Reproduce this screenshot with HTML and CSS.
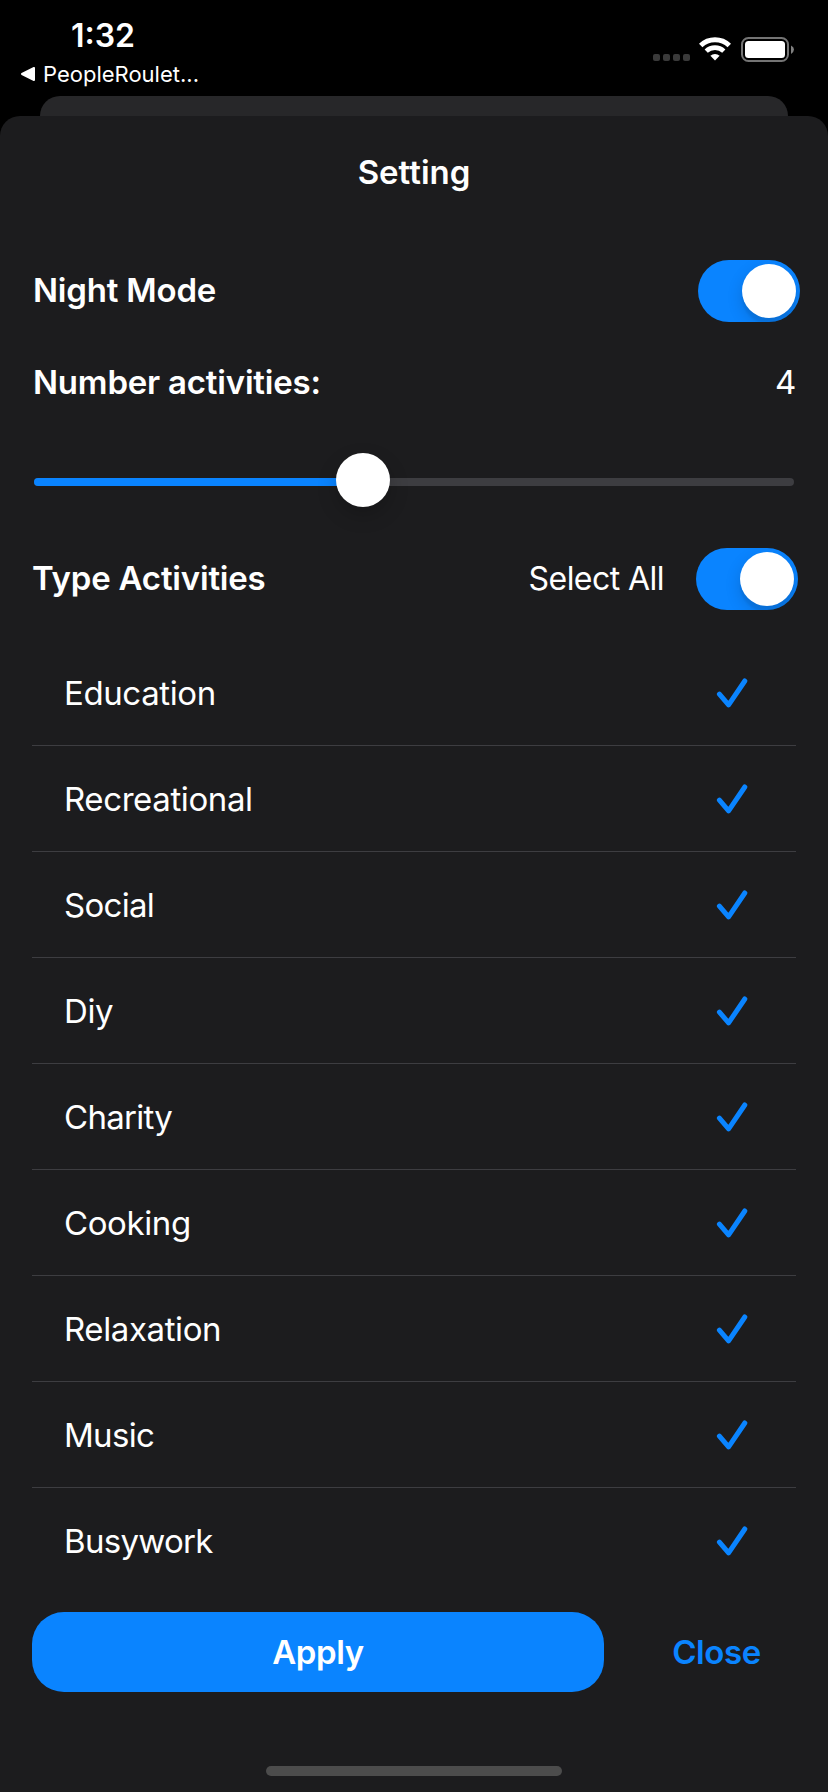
FILE: index.html
```html
<!DOCTYPE html>
<html lang="en">
<head>
<meta charset="utf-8">
<title>Setting</title>
<link rel="stylesheet" href="styles.css">
</head>
<body>
<svg class="defs" aria-hidden="true">
  <symbol id="check" viewBox="0 0 32 32"><path d="M3.4 17.1 12.6 27.9 28.8 4" fill="none" stroke="currentColor" stroke-width="5" stroke-linecap="round" stroke-linejoin="round"/></symbol>
</svg>
<header class="status">
  <div class="status-left">
    <div class="time">1:32</div>
    <div class="back">
      <svg class="back-arrow" width="15" height="14" viewBox="0 0 15 14"><path d="M1 7 13 1v12z" fill="#fff" stroke="#fff" stroke-width="2" stroke-linejoin="round"/></svg>
      <span class="back-label">PeopleRoulet...</span>
    </div>
  </div>
  <div class="status-icons">
    <div class="signal"><i class="dot"></i><i class="dot"></i><i class="dot"></i><i class="dot"></i></div>
    <svg class="wifi" width="32" height="24" viewBox="0 0 32 24">
      <g fill="none" stroke="#fff">
        <path d="M1.7 8.5A20.5 20.5 0 0 1 30.3 8.5" stroke-width="5"/>
        <path d="M7.2 14.2A12.7 12.7 0 0 1 24.8 14.2" stroke-width="4.6"/>
      </g>
      <path d="M11.4 18.8A6.6 6.6 0 0 1 20.6 18.8L16 23.6z" fill="#fff"/>
    </svg>
    <svg class="battery" width="54" height="26" viewBox="0 0 54 26">
      <rect x="1" y="1" width="46" height="23" rx="6.5" fill="none" stroke="#747474" stroke-width="2"/>
      <rect x="4" y="4" width="40" height="17" rx="3.5" fill="#fff"/>
      <path d="M50 8.5Q53 10 53 12.5T50 17z" fill="#808080"/>
    </svg>
  </div>
</header>
<div class="card-behind"></div>
<main class="sheet">
  <h1 class="title">Setting</h1>
  <section class="row night">
    <span class="label">Night Mode</span>
    <span class="switch"><span class="knob"></span></span>
  </section>
  <section class="row number">
    <span class="label">Number activities:</span>
    <span class="value">4</span>
  </section>
  <div class="slider"><div class="track"><div class="fill"></div></div><div class="thumb"></div></div>
  <section class="row types">
    <span class="label types-label">Type Activities</span>
    <span class="select-all">Select All</span>
    <span class="switch"><span class="knob"></span></span>
  </section>
  <ul class="list">
    <li class="item"><span>Education</span><svg class="check"><use href="#check"/></svg></li>
    <li class="item"><span>Recreational</span><svg class="check"><use href="#check"/></svg></li>
    <li class="item"><span class="tight">Social</span><svg class="check"><use href="#check"/></svg></li>
    <li class="item"><span>Diy</span><svg class="check"><use href="#check"/></svg></li>
    <li class="item"><span class="tight">Charity</span><svg class="check"><use href="#check"/></svg></li>
    <li class="item"><span>Cooking</span><svg class="check"><use href="#check"/></svg></li>
    <li class="item"><span>Relaxation</span><svg class="check"><use href="#check"/></svg></li>
    <li class="item"><span class="tight">Music</span><svg class="check"><use href="#check"/></svg></li>
    <li class="item"><span class="tight">Busywork</span><svg class="check"><use href="#check"/></svg></li>
  </ul>
  <footer class="actions">
    <button class="apply">Apply</button>
    <button class="close">Close</button>
  </footer>
  <div class="home"></div>
</main>
</body>
</html>
```
FILE: styles.css
```css
* { box-sizing: border-box; }
body {
  margin: 0;
  width: 828px;
  height: 1792px;
  overflow: hidden;
  background: #000;
  color: #fff;
  font-family: Inter, "Liberation Sans", sans-serif;
  font-size: 33px;
  line-height: 40px;
  letter-spacing: -0.4px;
}
.defs { position: absolute; width: 0; height: 0; }

.status { display: flex; justify-content: space-between; height: 96px; }
.status-left { padding: 16px 0 0 21px; }
.time { padding-left: 50px; font-size: 32px; font-weight: 600; letter-spacing: 0; }
.back { display: flex; align-items: center; gap: 7px; height: 30px; margin-top: 3px; font-size: 22px; line-height: 30px; letter-spacing: 0; }
.status-icons { display: flex; align-items: flex-start; padding: 37px 33px 0 0; }
.signal { display: flex; gap: 3px; padding-top: 17px; margin-right: 9px; }
.dot { width: 7px; height: 7px; border-radius: 2px; background: #3a3a3a; }
.wifi { margin-right: 10px; }

.card-behind { height: 20px; margin: 0 40px; border-radius: 20px 20px 0 0; background: #272729; }
.sheet { height: 1676px; padding: 0 32px; border-radius: 20px 20px 0 0; background: #1c1c1e; }
.title { margin: 0; height: 112px; font-size: 33px; line-height: 112px; font-weight: 600; text-align: center; letter-spacing: 0; }
.row { display: flex; align-items: center; justify-content: space-between; }
.night { height: 62px; margin: 32px -4px 0 0; }
.number { height: 60px; margin-top: 30px; }
.switch { width: 102px; height: 62px; padding: 4px; display: flex; justify-content: flex-end; border-radius: 31px; background: #0a84ff; overflow: hidden; }
.knob { width: 54px; height: 54px; border-radius: 50%; background: #fff; box-shadow: 0 6px 16px rgba(0,0,0,.15), 0 6px 2px rgba(0,0,0,.06); }
.label { padding: 0 0 2px 1px; font-weight: 600; letter-spacing: -0.2px; }
.number .label { padding-bottom: 0; }
.types .label { padding-left: 0; }

.slider { display: grid; align-items: center; height: 54px; margin: 41px 2px 0; }
.track, .thumb { grid-area: 1 / 1; }
.track { height: 8px; margin-top: 4px; border-radius: 4px; background: #3d3d41; overflow: hidden; }
.fill { width: 43%; height: 100%; background: #0a84ff; }
.thumb { width: 54px; height: 54px; margin-left: 302px; border-radius: 50%; background: #fff; box-shadow: 0 8px 20px rgba(0,0,0,.2); }

.types { height: 62px; margin: 41px -2px 0 0; }
.select-all { margin: 0 32px 0 auto; font-size: 32px; letter-spacing: -0.55px; }

.list { margin: 30px 0 0; padding: 0; list-style: none; }
.item { display: flex; align-items: center; justify-content: space-between; height: 106px; padding: 0 48px 0 32px; border-bottom: 1px solid #3d3d41; }
.item:last-child { border-bottom-color: transparent; }
.tight { letter-spacing: -0.7px; }
.check { width: 32px; height: 32px; color: #0a84ff; }

.actions { display: flex; height: 80px; margin-top: 18px; }
button { border: 0; padding: 0; font: inherit; font-weight: 600; letter-spacing: -0.4px; }
.apply { width: 572px; border-radius: 32px; background: #0a84ff; color: #fff; }
.close { flex: 1; margin-left: 33px; background: none; color: #0a84ff; }
.home { width: 296px; height: 10px; margin: 74px auto 0; border-radius: 5px; background: #4c4c4c; }
```
